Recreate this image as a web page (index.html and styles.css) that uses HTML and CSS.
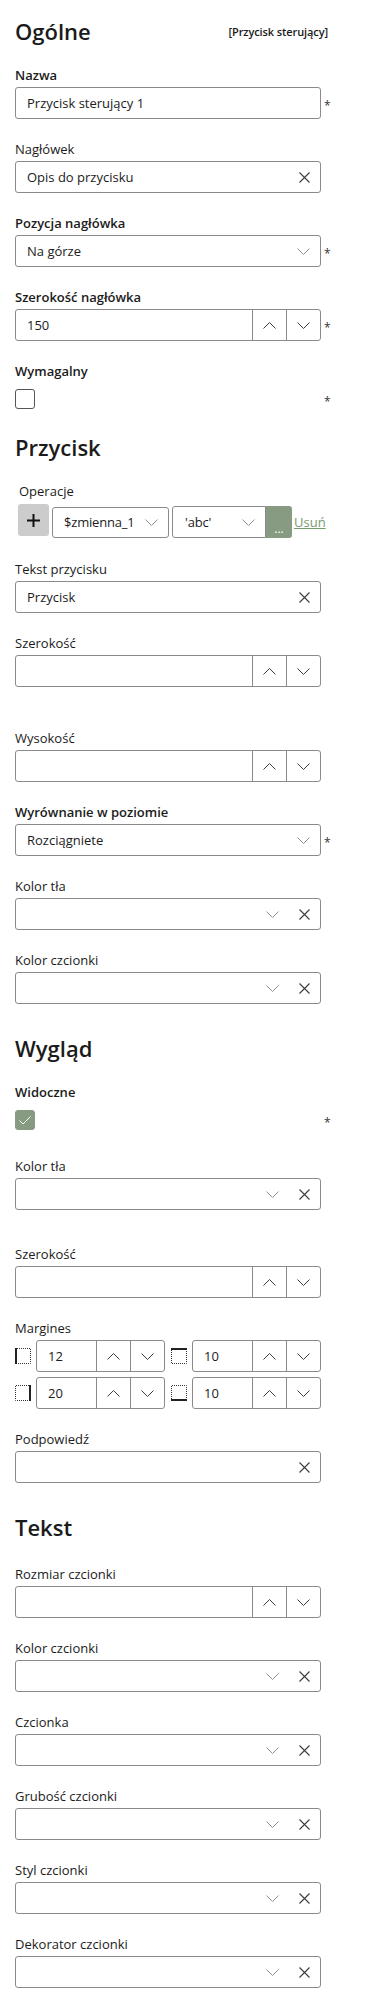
FILE: index.html
```html
<!DOCTYPE html>
<html lang="pl">
<head>
<meta charset="utf-8">
<title>Właściwości</title>
<link rel="stylesheet" href="styles.css">
</head>
<body>
<div class="panel">

  <section class="section">
    <div class="section-head">
      <h2 class="section-title">Ogólne</h2>
      <span class="section-type">[Przycisk sterujący]</span>
    </div>

    <div class="field">
      <label class="field-label field-label--req">Nazwa</label>
      <div class="field-row">
        <div class="input"><span class="input-text">Przycisk sterujący 1</span></div>
        <span class="req">*</span>
      </div>
    </div>

    <div class="field">
      <label class="field-label">Nagłówek</label>
      <div class="field-row">
        <div class="input"><span class="input-text">Opis do przycisku</span>
          <span class="icon-btn"><svg class="ic-x" width="11" height="11" viewBox="0 0 11 11"><path d="M0.5 0.5L10.5 10.5M10.5 0.5L0.5 10.5"/></svg></span>
        </div>
      </div>
    </div>

    <div class="field">
      <label class="field-label field-label--req">Pozycja nagłówka</label>
      <div class="field-row">
        <div class="input"><span class="input-text">Na górze</span>
          <span class="icon-btn icon-btn--sel"><svg class="ic-chev" width="13" height="7" viewBox="0 0 13 7"><path d="M0.5 0.5L6.5 6.5L12.5 0.5"/></svg></span>
        </div>
        <span class="req">*</span>
      </div>
    </div>

    <div class="field">
      <label class="field-label field-label--req">Szerokość nagłówka</label>
      <div class="field-row">
        <div class="input"><span class="input-text">150</span>
          <span class="spin-btn"><svg class="ic-spin" width="13" height="7" viewBox="0 0 13 7"><path d="M0.5 6.5L6.5 0.5L12.5 6.5"/></svg></span>
          <span class="spin-btn"><svg class="ic-spin" width="13" height="7" viewBox="0 0 13 7"><path d="M0.5 0.5L6.5 6.5L12.5 0.5"/></svg></span>
        </div>
        <span class="req">*</span>
      </div>
    </div>

    <div class="field">
      <label class="field-label field-label--req">Wymagalny</label>
      <div class="field-row">
        <div class="check-wrap"><span class="checkbox"></span></div>
        <span class="req">*</span>
      </div>
    </div>
  </section>

  <section class="section section--spaced">
    <div class="section-head">
      <h2 class="section-title">Przycisk</h2>
    </div>

    <div class="field field--ops">
      <label class="field-label ops-label">Operacje</label>
      <div class="ops-row">
        <span class="ops-add"><svg width="13" height="13" viewBox="0 0 13 13"><path d="M6.5 0V13M0 6.5H13"/></svg></span>
        <div class="ops-select ops-select--var"><span class="ops-text">$zmienna_1</span>
          <span class="ops-chev"><svg class="ic-chev" width="13" height="7" viewBox="0 0 13 7"><path d="M0.5 0.5L6.5 6.5L12.5 0.5"/></svg></span>
        </div>
        <div class="ops-group">
          <div class="ops-select ops-select--val"><span class="ops-text">'abc'</span>
            <span class="ops-chev"><svg class="ic-chev" width="13" height="7" viewBox="0 0 13 7"><path d="M0.5 0.5L6.5 6.5L12.5 0.5"/></svg></span>
          </div>
          <span class="ops-more">...</span>
        </div>
        <a class="ops-remove" href="#">Usuń</a>
      </div>
    </div>

    <div class="field">
      <label class="field-label">Tekst przycisku</label>
      <div class="field-row">
        <div class="input"><span class="input-text">Przycisk</span>
          <span class="icon-btn"><svg class="ic-x" width="11" height="11" viewBox="0 0 11 11"><path d="M0.5 0.5L10.5 10.5M10.5 0.5L0.5 10.5"/></svg></span>
        </div>
      </div>
    </div>

    <div class="field field--gap-lg">
      <label class="field-label">Szerokość</label>
      <div class="field-row">
        <div class="input"><span class="input-text"></span>
          <span class="spin-btn"><svg class="ic-spin" width="13" height="7" viewBox="0 0 13 7"><path d="M0.5 6.5L6.5 0.5L12.5 6.5"/></svg></span>
          <span class="spin-btn"><svg class="ic-spin" width="13" height="7" viewBox="0 0 13 7"><path d="M0.5 0.5L6.5 6.5L12.5 0.5"/></svg></span>
        </div>
      </div>
    </div>

    <div class="field">
      <label class="field-label">Wysokość</label>
      <div class="field-row">
        <div class="input"><span class="input-text"></span>
          <span class="spin-btn"><svg class="ic-spin" width="13" height="7" viewBox="0 0 13 7"><path d="M0.5 6.5L6.5 0.5L12.5 6.5"/></svg></span>
          <span class="spin-btn"><svg class="ic-spin" width="13" height="7" viewBox="0 0 13 7"><path d="M0.5 0.5L6.5 6.5L12.5 0.5"/></svg></span>
        </div>
      </div>
    </div>

    <div class="field">
      <label class="field-label field-label--req">Wyrównanie w poziomie</label>
      <div class="field-row">
        <div class="input"><span class="input-text">Rozciągniete</span>
          <span class="icon-btn icon-btn--sel"><svg class="ic-chev" width="13" height="7" viewBox="0 0 13 7"><path d="M0.5 0.5L6.5 6.5L12.5 0.5"/></svg></span>
        </div>
        <span class="req">*</span>
      </div>
    </div>

    <div class="field">
      <label class="field-label">Kolor tła</label>
      <div class="field-row">
        <div class="input"><span class="input-text"></span>
          <span class="icon-btn"><svg class="ic-chev" width="13" height="7" viewBox="0 0 13 7"><path d="M0.5 0.5L6.5 6.5L12.5 0.5"/></svg></span>
          <span class="icon-btn"><svg class="ic-x" width="11" height="11" viewBox="0 0 11 11"><path d="M0.5 0.5L10.5 10.5M10.5 0.5L0.5 10.5"/></svg></span>
        </div>
      </div>
    </div>

    <div class="field">
      <label class="field-label">Kolor czcionki</label>
      <div class="field-row">
        <div class="input"><span class="input-text"></span>
          <span class="icon-btn"><svg class="ic-chev" width="13" height="7" viewBox="0 0 13 7"><path d="M0.5 0.5L6.5 6.5L12.5 0.5"/></svg></span>
          <span class="icon-btn"><svg class="ic-x" width="11" height="11" viewBox="0 0 11 11"><path d="M0.5 0.5L10.5 10.5M10.5 0.5L0.5 10.5"/></svg></span>
        </div>
      </div>
    </div>
  </section>

  <section class="section section--spaced">
    <div class="section-head">
      <h2 class="section-title">Wygląd</h2>
    </div>

    <div class="field">
      <label class="field-label field-label--req">Widoczne</label>
      <div class="field-row">
        <div class="check-wrap"><span class="checkbox checkbox--on"><svg width="20" height="20" viewBox="0 0 20 20"><path d="M4.5 10.5L8 14L15.5 6.5"/></svg></span></div>
        <span class="req">*</span>
      </div>
    </div>

    <div class="field field--gap-md">
      <label class="field-label">Kolor tła</label>
      <div class="field-row">
        <div class="input"><span class="input-text"></span>
          <span class="icon-btn"><svg class="ic-chev" width="13" height="7" viewBox="0 0 13 7"><path d="M0.5 0.5L6.5 6.5L12.5 0.5"/></svg></span>
          <span class="icon-btn"><svg class="ic-x" width="11" height="11" viewBox="0 0 11 11"><path d="M0.5 0.5L10.5 10.5M10.5 0.5L0.5 10.5"/></svg></span>
        </div>
      </div>
    </div>

    <div class="field">
      <label class="field-label">Szerokość</label>
      <div class="field-row">
        <div class="input"><span class="input-text"></span>
          <span class="spin-btn"><svg class="ic-spin" width="13" height="7" viewBox="0 0 13 7"><path d="M0.5 6.5L6.5 0.5L12.5 6.5"/></svg></span>
          <span class="spin-btn"><svg class="ic-spin" width="13" height="7" viewBox="0 0 13 7"><path d="M0.5 0.5L6.5 6.5L12.5 0.5"/></svg></span>
        </div>
      </div>
    </div>

    <div class="field">
      <label class="field-label">Margines</label>
      <div class="margins">
        <div class="margin-cell">
          <svg class="ic-margin" width="16" height="16" viewBox="0 0 16 16"><path class="dot" d="M2 0.5H15.5V15.5H2"/><path class="solid" d="M1 0V16"/></svg>
          <div class="input input--sm"><span class="input-text">12</span>
            <span class="spin-btn"><svg class="ic-spin" width="13" height="7" viewBox="0 0 13 7"><path d="M0.5 6.5L6.5 0.5L12.5 6.5"/></svg></span>
            <span class="spin-btn"><svg class="ic-spin" width="13" height="7" viewBox="0 0 13 7"><path d="M0.5 0.5L6.5 6.5L12.5 0.5"/></svg></span>
          </div>
        </div>
        <div class="margin-cell">
          <svg class="ic-margin" width="16" height="16" viewBox="0 0 16 16"><path class="dot" d="M0.5 2V15.5H15.5V2"/><path class="solid" d="M0 1H16"/></svg>
          <div class="input input--sm"><span class="input-text">10</span>
            <span class="spin-btn"><svg class="ic-spin" width="13" height="7" viewBox="0 0 13 7"><path d="M0.5 6.5L6.5 0.5L12.5 6.5"/></svg></span>
            <span class="spin-btn"><svg class="ic-spin" width="13" height="7" viewBox="0 0 13 7"><path d="M0.5 0.5L6.5 6.5L12.5 0.5"/></svg></span>
          </div>
        </div>
        <div class="margin-cell">
          <svg class="ic-margin" width="16" height="16" viewBox="0 0 16 16"><path class="dot" d="M14 0.5H0.5V15.5H14"/><path class="solid" d="M15 0V16"/></svg>
          <div class="input input--sm"><span class="input-text">20</span>
            <span class="spin-btn"><svg class="ic-spin" width="13" height="7" viewBox="0 0 13 7"><path d="M0.5 6.5L6.5 0.5L12.5 6.5"/></svg></span>
            <span class="spin-btn"><svg class="ic-spin" width="13" height="7" viewBox="0 0 13 7"><path d="M0.5 0.5L6.5 6.5L12.5 0.5"/></svg></span>
          </div>
        </div>
        <div class="margin-cell">
          <svg class="ic-margin" width="16" height="16" viewBox="0 0 16 16"><path class="dot" d="M0.5 14V0.5H15.5V14"/><path class="solid" d="M0 15H16"/></svg>
          <div class="input input--sm"><span class="input-text">10</span>
            <span class="spin-btn"><svg class="ic-spin" width="13" height="7" viewBox="0 0 13 7"><path d="M0.5 6.5L6.5 0.5L12.5 6.5"/></svg></span>
            <span class="spin-btn"><svg class="ic-spin" width="13" height="7" viewBox="0 0 13 7"><path d="M0.5 0.5L6.5 6.5L12.5 0.5"/></svg></span>
          </div>
        </div>
      </div>
    </div>

    <div class="field">
      <label class="field-label">Podpowiedź</label>
      <div class="field-row">
        <div class="input"><span class="input-text"></span>
          <span class="icon-btn"><svg class="ic-x" width="11" height="11" viewBox="0 0 11 11"><path d="M0.5 0.5L10.5 10.5M10.5 0.5L0.5 10.5"/></svg></span>
        </div>
      </div>
    </div>
  </section>

  <section class="section section--text">
    <div class="section-head">
      <h2 class="section-title">Tekst</h2>
    </div>

    <div class="field">
      <label class="field-label">Rozmiar czcionki</label>
      <div class="field-row">
        <div class="input"><span class="input-text"></span>
          <span class="spin-btn"><svg class="ic-spin" width="13" height="7" viewBox="0 0 13 7"><path d="M0.5 6.5L6.5 0.5L12.5 6.5"/></svg></span>
          <span class="spin-btn"><svg class="ic-spin" width="13" height="7" viewBox="0 0 13 7"><path d="M0.5 0.5L6.5 6.5L12.5 0.5"/></svg></span>
        </div>
      </div>
    </div>

    <div class="field">
      <label class="field-label">Kolor czcionki</label>
      <div class="field-row">
        <div class="input"><span class="input-text"></span>
          <span class="icon-btn"><svg class="ic-chev" width="13" height="7" viewBox="0 0 13 7"><path d="M0.5 0.5L6.5 6.5L12.5 0.5"/></svg></span>
          <span class="icon-btn"><svg class="ic-x" width="11" height="11" viewBox="0 0 11 11"><path d="M0.5 0.5L10.5 10.5M10.5 0.5L0.5 10.5"/></svg></span>
        </div>
      </div>
    </div>

    <div class="field">
      <label class="field-label">Czcionka</label>
      <div class="field-row">
        <div class="input"><span class="input-text"></span>
          <span class="icon-btn"><svg class="ic-chev" width="13" height="7" viewBox="0 0 13 7"><path d="M0.5 0.5L6.5 6.5L12.5 0.5"/></svg></span>
          <span class="icon-btn"><svg class="ic-x" width="11" height="11" viewBox="0 0 11 11"><path d="M0.5 0.5L10.5 10.5M10.5 0.5L0.5 10.5"/></svg></span>
        </div>
      </div>
    </div>

    <div class="field">
      <label class="field-label">Grubość czcionki</label>
      <div class="field-row">
        <div class="input"><span class="input-text"></span>
          <span class="icon-btn"><svg class="ic-chev" width="13" height="7" viewBox="0 0 13 7"><path d="M0.5 0.5L6.5 6.5L12.5 0.5"/></svg></span>
          <span class="icon-btn"><svg class="ic-x" width="11" height="11" viewBox="0 0 11 11"><path d="M0.5 0.5L10.5 10.5M10.5 0.5L0.5 10.5"/></svg></span>
        </div>
      </div>
    </div>

    <div class="field">
      <label class="field-label">Styl czcionki</label>
      <div class="field-row">
        <div class="input"><span class="input-text"></span>
          <span class="icon-btn"><svg class="ic-chev" width="13" height="7" viewBox="0 0 13 7"><path d="M0.5 0.5L6.5 6.5L12.5 0.5"/></svg></span>
          <span class="icon-btn"><svg class="ic-x" width="11" height="11" viewBox="0 0 11 11"><path d="M0.5 0.5L10.5 10.5M10.5 0.5L0.5 10.5"/></svg></span>
        </div>
      </div>
    </div>

    <div class="field">
      <label class="field-label">Dekorator czcionki</label>
      <div class="field-row">
        <div class="input"><span class="input-text"></span>
          <span class="icon-btn"><svg class="ic-chev" width="13" height="7" viewBox="0 0 13 7"><path d="M0.5 0.5L6.5 6.5L12.5 0.5"/></svg></span>
          <span class="icon-btn"><svg class="ic-x" width="11" height="11" viewBox="0 0 11 11"><path d="M0.5 0.5L10.5 10.5M10.5 0.5L0.5 10.5"/></svg></span>
        </div>
      </div>
    </div>
  </section>

</div>
</body>
</html>
```

FILE: styles.css
```css
html, body {
  margin: 0;
  padding: 0;
  background: #ffffff;
}

body {
  font-family: "Open Sans", "Noto Sans", "DejaVu Sans", sans-serif;
  font-size: 13px;
  color: #1b1b1b;
}

.panel {
  padding: 19px 0 0 15px;
}

.section {
  display: flow-root;
}

.section--spaced {
  margin-bottom: 12px;
}

.section-head {
  display: flex;
  justify-content: space-between;
  align-items: center;
  width: 313px;
  margin-bottom: 22px;
}

.section--text .section-head {
  margin-bottom: 25px;
}

.section-title {
  margin: 0;
  font-size: 22px;
  font-weight: 600;
  line-height: 24px;
}

.section-type {
  font-size: 11px;
  font-weight: 600;
  letter-spacing: -0.1px;
}

.field {
  margin-bottom: 20px;
}

.field--gap-lg {
  margin-bottom: 41px;
}

.field--gap-md {
  margin-bottom: 34px;
}

.field--ops {
  margin-bottom: 21px;
}

.field-label {
  display: block;
  line-height: 20px;
  margin-bottom: 2px;
}

.field-label--req {
  font-weight: 600;
}

.field-row {
  display: flex;
  align-items: center;
}

.input {
  width: 306px;
  height: 32px;
  box-sizing: border-box;
  border: 1px solid #8a8a8a;
  border-radius: 3px;
  display: flex;
  align-items: stretch;
  background: #fff;
}

.input-text {
  flex: 1;
  min-width: 0;
  padding-left: 11px;
  line-height: 30px;
  white-space: nowrap;
  overflow: hidden;
}

.icon-btn {
  width: 32px;
  display: flex;
  align-items: center;
  justify-content: center;
}

.icon-btn--sel {
  width: 34px;
}

.spin-btn {
  width: 34px;
  box-sizing: border-box;
  border-left: 1px solid #8a8a8a;
  display: flex;
  align-items: center;
  justify-content: center;
}

.ic-x path {
  fill: none;
  stroke: #3c3c3c;
  stroke-width: 1.1;
}

.ic-chev path {
  fill: none;
  stroke: #8f8f8f;
  stroke-width: 1;
}

.ic-spin path {
  fill: none;
  stroke: #3c3c3c;
  stroke-width: 1;
}

.req {
  margin-left: 3px;
  font-size: 12px;
  line-height: 12px;
  margin-top: 6px;
  color: #333;
}

.check-wrap {
  width: 306px;
  height: 32px;
  display: flex;
  align-items: center;
}

.checkbox {
  width: 20px;
  height: 20px;
  box-sizing: border-box;
  border: 1px solid #555;
  border-radius: 3px;
  background: #fff;
  display: block;
}

.checkbox--on {
  border-color: #869b82;
  background: #869b82;
}

.checkbox--on svg {
  display: block;
  margin: -1px;
}

.checkbox--on path {
  fill: none;
  stroke: #ffffff;
  stroke-width: 1;
}

.ops-label {
  margin-left: 4px;
  margin-bottom: 3px;
}

.ops-row {
  display: flex;
  align-items: flex-start;
  height: 34px;
}

.ops-add {
  width: 31px;
  height: 32px;
  margin-left: 3px;
  border-radius: 3px;
  background: #cccccc;
  display: flex;
  align-items: center;
  justify-content: center;
}

.ops-add path {
  stroke: #111;
  stroke-width: 2;
  fill: none;
}

.ops-select {
  height: 31px;
  box-sizing: border-box;
  border: 1px solid #8a8a8a;
  border-radius: 3px;
  display: flex;
  align-items: stretch;
  background: #fff;
}

.ops-text {
  flex: 1;
  min-width: 0;
  padding-left: 11px;
  line-height: 29px;
  white-space: nowrap;
  letter-spacing: -0.2px;
}

.ops-select--var {
  width: 117px;
  margin-left: 3px;
  margin-top: 3px;
}

.ops-group {
  display: flex;
  margin-left: 3px;
  margin-top: 2px;
}

.ops-select--val {
  width: 94px;
  height: 32px;
  border-radius: 3px 0 0 3px;
}

.ops-select--val .ops-text {
  padding-left: 12px;
  line-height: 30px;
}

.ops-chev {
  flex: 0 0 26px;
  padding-right: 4px;
  display: flex;
  align-items: center;
  justify-content: center;
}

.ops-more {
  width: 26px;
  height: 32px;
  box-sizing: border-box;
  background: #869b82;
  border-radius: 0 3px 3px 0;
  color: #ffffff;
  font-size: 12px;
  line-height: 12px;
  display: flex;
  align-items: flex-end;
  justify-content: center;
  padding-bottom: 3px;
}

.ops-remove {
  margin-left: 2px;
  align-self: center;
  color: #789a6f;
  text-decoration: underline;
  line-height: 20px;
  margin-top: 2px;
}

.margins {
  display: grid;
  grid-template-columns: 150px 150px;
  column-gap: 6px;
  row-gap: 5px;
  width: 306px;
}

.margin-cell {
  display: flex;
  align-items: center;
  gap: 5px;
}

.ic-margin {
  flex: 0 0 16px;
}

.ic-margin .dot {
  fill: none;
  stroke: #333;
  stroke-width: 1;
  stroke-dasharray: 1 1;
}

.ic-margin .solid {
  fill: none;
  stroke: #222;
  stroke-width: 2;
}

.input--sm {
  width: auto;
  flex: 1;
}
```
